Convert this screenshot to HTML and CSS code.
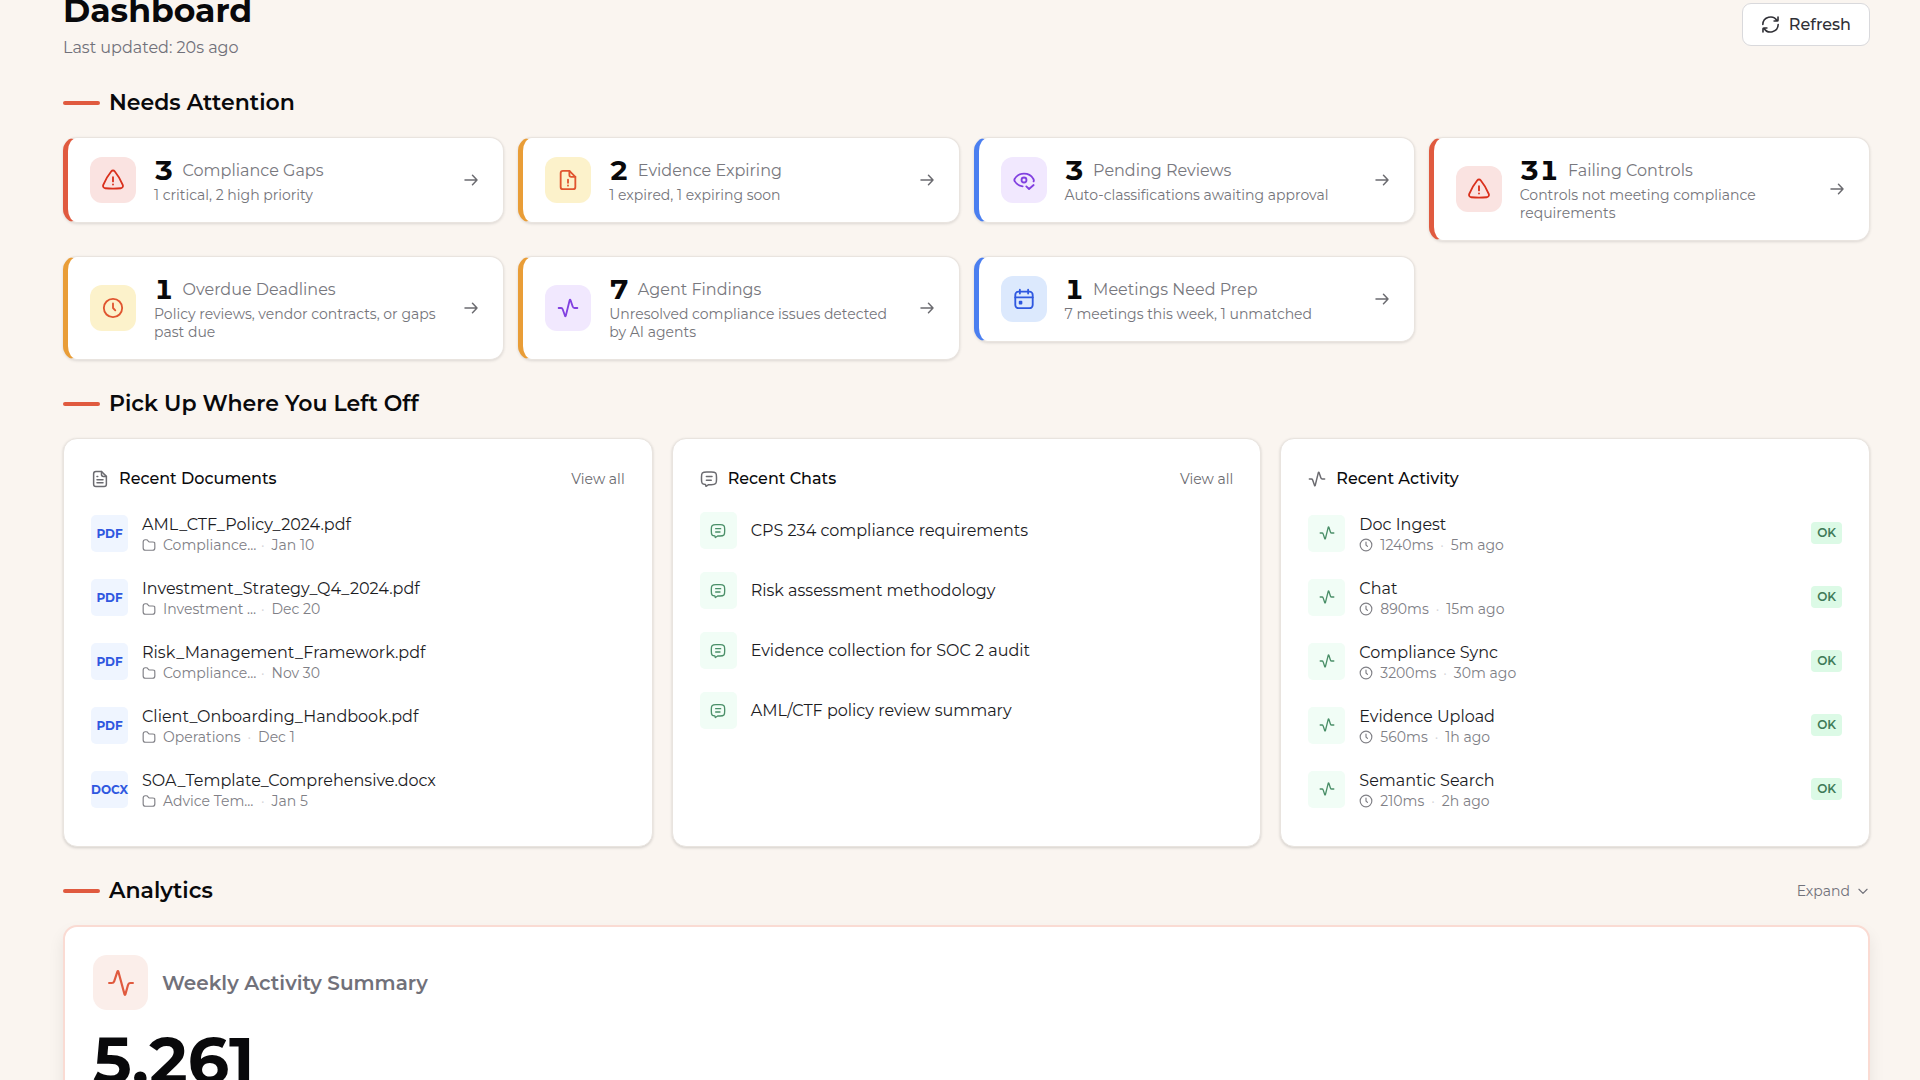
FILE: index.html
```html
<!DOCTYPE html>
<html lang="en">
<head>
<meta charset="utf-8">
<title>Dashboard</title>
<link rel="stylesheet" href="styles.css">
</head>
<body>
<svg class="sprite" aria-hidden="true">
  <symbol id="i-alert" viewBox="0 0 24 24"><path d="M10.200 2.500c.9-1.100 2.700-1.100 3.600 0C16.500 5.800 20.800 13 22.600 17.300c.7 1.800-.3 3.500-2.200 3.700-4.500.5-12.300.5-16.800 0C1.700 20.800.7 19.100 1.400 17.300 3.200 13 7.500 5.800 10.200 2.500z"/><path d="M12 9v4.500M12 16.700v.2"/></symbol>
  <symbol id="i-filealert" viewBox="0 0 24 24"><path d="M13.500 2H6.500A2.500 2.500 0 0 0 4 4.500v15A2.500 2.500 0 0 0 6.500 22h11a2.500 2.500 0 0 0 2.500-2.500V8.500z"/><path d="M13.500 2v4.500a2 2 0 0 0 2 2H20M12 11.500V15M12 18v.2"/></symbol>
  <symbol id="i-eyecheck" viewBox="0 0 24 24"><path d="M22.500 13.500c.4-.8.4-1.700-.5-3C20.700 8.300 17.200 5 12 5s-8.700 3.300-10 5.500c-.7 1-.7 2 0 3 1.200 1.900 4.300 4.900 8.500 5.400"/><circle cx="12" cy="12" r="2.700"/><path d="M14.500 19 17.500 21.800l5-4.300"/></symbol>
  <symbol id="i-pulse" viewBox="0 0 24 24"><path d="M1.800 12h2.700c.9 0 1.300.2 1.700 1.300l2.500 7.200c.3.700.7.700.9 0L13.800 3.500c.2-.8.7-.8 1 0l2.300 6.900c.4 1.200.9 1.600 2 1.600h3.100"/></symbol>
  <symbol id="i-pulse2" viewBox="0 0 24 24"><path d="M1 12h2.500c1.200 0 1.800-.3 2.200-1.500L8.600 1.700c.3-.8.8-.8 1 0l5.600 20.600c.2.800.7.800.9 0l2.300-8.300c.4-1.400.9-2 2.300-2H23"/></symbol>
  <symbol id="i-clock" viewBox="0 0 24 24"><circle cx="12" cy="12" r="10"/><path d="M12 7v5l2.500 2.500"/></symbol>
  <symbol id="i-calendar" viewBox="0 0 24 24"><rect x="2.500" y="4" width="19" height="18" rx="3.500"/><path d="M7.500 1.800V6M16.500 1.800V6M2.500 10.300h19M7.300 15h1.900v1.900H7.300z"/></symbol>
  <symbol id="i-arrow" viewBox="0 0 24 24"><path d="M4 12h16M14 5.800l6 6.200-6 6.200"/></symbol>
  <symbol id="i-refresh" viewBox="0 0 24 24"><path d="M21.500 2.500v4c0 .7-.2 1-1 1h-4M20.300 7.300A9.700 9.700 0 0 0 2.300 12M2.500 21.500v-4c0-.7.200-1 1-1h4M3.700 16.700A9.700 9.700 0 0 0 21.700 12"/></symbol>
  <symbol id="i-file" viewBox="0 0 24 24"><path d="M14 2H6.500A3 3 0 0 0 3.500 5v14a3 3 0 0 0 3 3h11a3 3 0 0 0 3-3V8.500z"/><path d="M14 2v4a2.500 2.500 0 0 0 2.500 2.500h4M8 17h8M8 13h8M8 8.500h1"/></symbol>
  <symbol id="i-chat" viewBox="0 0 24 24"><path d="M22 9.500c0-3-.1-4.500-1.100-5.500S18.500 2.500 15 2.500H9c-3.500 0-4.900.5-5.900 1.500S2 6.500 2 9.500v3c0 3 .1 4.500 1.100 5.500.8.900 1.900 1.200 4.200 1.400l.7 2.400 3.500-2.300H15c3.500 0 4.900-.5 5.900-1.500s1.100-2.500 1.100-5.500z"/><path d="M8.500 13.500h6.500M8.500 8.500H16"/></symbol>
  <symbol id="i-folder" viewBox="0 0 24 24"><path d="M2 7c0-2.800.7-4 3.500-4H7c2 0 2.700.5 3.500 2 .7 1.300 1 1.800 2.500 1.800h5c2.200 0 3.200.2 3.600 1 .4 1 .4 2.200.4 5.200v4c0 3-.8 4-4 4H6c-3.200 0-4-1-4-4z"/></symbol>
  <symbol id="i-down" viewBox="0 0 24 24"><path d="M5 9l7 7 7-7"/></symbol>
</svg>

<main class="page">
  <header class="page-header">
    <div>
      <h1>Dashboard</h1>
      <p class="updated">Last updated: 20s ago</p>
    </div>
    <button type="button" class="refresh"><svg class="icon s20"><use href="#i-refresh"/></svg>Refresh</button>
  </header>

  <section>
    <div class="section-head"><h2>Needs Attention</h2></div>
    <div class="alerts">
      <a href="#" class="alert red"><span class="tile t-red"><svg class="icon s22"><use href="#i-alert"/></svg></span><span class="alert-body"><span class="alert-top"><b>3</b><span class="label">Compliance Gaps</span></span><span class="desc">1 critical, 2 high priority</span></span><svg class="icon s18 arrow"><use href="#i-arrow"/></svg></a>
      <a href="#" class="alert amber"><span class="tile t-yellow"><svg class="icon s22"><use href="#i-filealert"/></svg></span><span class="alert-body"><span class="alert-top"><b>2</b><span class="label">Evidence Expiring</span></span><span class="desc">1 expired, 1 expiring soon</span></span><svg class="icon s18 arrow"><use href="#i-arrow"/></svg></a>
      <a href="#" class="alert blue"><span class="tile t-purple"><svg class="icon s22"><use href="#i-eyecheck"/></svg></span><span class="alert-body"><span class="alert-top"><b>3</b><span class="label">Pending Reviews</span></span><span class="desc">Auto-classifications awaiting approval</span></span><svg class="icon s18 arrow"><use href="#i-arrow"/></svg></a>
      <a href="#" class="alert red"><span class="tile t-red"><svg class="icon s22"><use href="#i-alert"/></svg></span><span class="alert-body"><span class="alert-top"><b>31</b><span class="label">Failing Controls</span></span><span class="desc">Controls not meeting compliance requirements</span></span><svg class="icon s18 arrow"><use href="#i-arrow"/></svg></a>
      <a href="#" class="alert amber"><span class="tile t-yellow"><svg class="icon s22"><use href="#i-clock"/></svg></span><span class="alert-body"><span class="alert-top"><b>1</b><span class="label">Overdue Deadlines</span></span><span class="desc">Policy reviews, vendor contracts, or gaps past due</span></span><svg class="icon s18 arrow"><use href="#i-arrow"/></svg></a>
      <a href="#" class="alert amber"><span class="tile t-purple"><svg class="icon s22"><use href="#i-pulse"/></svg></span><span class="alert-body"><span class="alert-top"><b>7</b><span class="label">Agent Findings</span></span><span class="desc">Unresolved compliance issues detected by AI agents</span></span><svg class="icon s18 arrow"><use href="#i-arrow"/></svg></a>
      <a href="#" class="alert blue"><span class="tile t-blue"><svg class="icon s22"><use href="#i-calendar"/></svg></span><span class="alert-body"><span class="alert-top"><b>1</b><span class="label">Meetings Need Prep</span></span><span class="desc">7 meetings this week, 1 unmatched</span></span><svg class="icon s18 arrow"><use href="#i-arrow"/></svg></a>
    </div>
  </section>

  <section>
    <div class="section-head"><h2>Pick Up Where You Left Off</h2></div>
    <div class="panels">
      <article class="panel">
        <div class="panel-head"><svg class="icon s18"><use href="#i-file"/></svg><h3>Recent Documents</h3><a href="#">View all</a></div>
        <ul class="rows">
          <li><a href="#" class="row"><span class="thumb doc">PDF</span><span class="row-body"><span class="name">AML_CTF_Policy_2024.pdf</span><span class="meta"><svg class="icon s14"><use href="#i-folder"/></svg><span class="clipped">Compliance…</span><i>·</i><span>Jan 10</span></span></span></a></li>
          <li><a href="#" class="row"><span class="thumb doc">PDF</span><span class="row-body"><span class="name">Investment_Strategy_Q4_2024.pdf</span><span class="meta"><svg class="icon s14"><use href="#i-folder"/></svg><span class="clipped">Investment …</span><i>·</i><span>Dec 20</span></span></span></a></li>
          <li><a href="#" class="row"><span class="thumb doc">PDF</span><span class="row-body"><span class="name">Risk_Management_Framework.pdf</span><span class="meta"><svg class="icon s14"><use href="#i-folder"/></svg><span class="clipped">Compliance…</span><i>·</i><span>Nov 30</span></span></span></a></li>
          <li><a href="#" class="row"><span class="thumb doc">PDF</span><span class="row-body"><span class="name">Client_Onboarding_Handbook.pdf</span><span class="meta"><svg class="icon s14"><use href="#i-folder"/></svg><span>Operations</span><i>·</i><span>Dec 1</span></span></span></a></li>
          <li><a href="#" class="row"><span class="thumb doc">DOCX</span><span class="row-body"><span class="name">SOA_Template_Comprehensive.docx</span><span class="meta"><svg class="icon s14"><use href="#i-folder"/></svg><span class="clipped">Advice Tem…</span><i>·</i><span>Jan 5</span></span></span></a></li>
        </ul>
      </article>

      <article class="panel">
        <div class="panel-head"><svg class="icon s18"><use href="#i-chat"/></svg><h3>Recent Chats</h3><a href="#">View all</a></div>
        <ul class="rows chats">
          <li><a href="#" class="row"><span class="thumb green"><svg class="icon s16"><use href="#i-chat"/></svg></span><span class="name">CPS 234 compliance requirements</span></a></li>
          <li><a href="#" class="row"><span class="thumb green"><svg class="icon s16"><use href="#i-chat"/></svg></span><span class="name">Risk assessment methodology</span></a></li>
          <li><a href="#" class="row"><span class="thumb green"><svg class="icon s16"><use href="#i-chat"/></svg></span><span class="name">Evidence collection for SOC 2 audit</span></a></li>
          <li><a href="#" class="row"><span class="thumb green"><svg class="icon s16"><use href="#i-chat"/></svg></span><span class="name">AML/CTF policy review summary</span></a></li>
        </ul>
      </article>

      <article class="panel">
        <div class="panel-head"><svg class="icon s18"><use href="#i-pulse"/></svg><h3>Recent Activity</h3></div>
        <ul class="rows">
          <li class="row"><span class="thumb green"><svg class="icon s16"><use href="#i-pulse"/></svg></span><span class="row-body"><span class="name">Doc Ingest</span><span class="meta"><svg class="icon s14"><use href="#i-clock"/></svg><span>1240ms</span><i>·</i><span>5m ago</span></span></span><span class="ok">OK</span></li>
          <li class="row"><span class="thumb green"><svg class="icon s16"><use href="#i-pulse"/></svg></span><span class="row-body"><span class="name">Chat</span><span class="meta"><svg class="icon s14"><use href="#i-clock"/></svg><span>890ms</span><i>·</i><span>15m ago</span></span></span><span class="ok">OK</span></li>
          <li class="row"><span class="thumb green"><svg class="icon s16"><use href="#i-pulse"/></svg></span><span class="row-body"><span class="name">Compliance Sync</span><span class="meta"><svg class="icon s14"><use href="#i-clock"/></svg><span>3200ms</span><i>·</i><span>30m ago</span></span></span><span class="ok">OK</span></li>
          <li class="row"><span class="thumb green"><svg class="icon s16"><use href="#i-pulse"/></svg></span><span class="row-body"><span class="name">Evidence Upload</span><span class="meta"><svg class="icon s14"><use href="#i-clock"/></svg><span>560ms</span><i>·</i><span>1h ago</span></span></span><span class="ok">OK</span></li>
          <li class="row"><span class="thumb green"><svg class="icon s16"><use href="#i-pulse"/></svg></span><span class="row-body"><span class="name">Semantic Search</span><span class="meta"><svg class="icon s14"><use href="#i-clock"/></svg><span>210ms</span><i>·</i><span>2h ago</span></span></span><span class="ok">OK</span></li>
        </ul>
      </article>
    </div>
  </section>

  <section>
    <div class="section-head"><h2>Analytics</h2><button type="button" class="expand">Expand<svg class="icon s14"><use href="#i-down"/></svg></button></div>
    <article class="summary">
      <div class="summary-head"><span class="summary-tile"><svg class="icon s26"><use href="#i-pulse2"/></svg></span><h3>Weekly Activity Summary</h3></div>
      <p class="total">5,261</p>
    </article>
  </section>
</main>
</body>
</html>
```
FILE: styles.css
```css
* { box-sizing: border-box; margin: 0; padding: 0; }

body {
  height: 100vh;
  overflow: hidden;
  background: #faf5f0;
  color: #09090b;
  font-family: Montserrat, Inter, sans-serif;
  font-size: 16px;
}

a { color: inherit; text-decoration: none; }
ul { list-style: none; }
button { font: inherit; cursor: pointer; }
.sprite { display: none; }

.icon {
  flex: none;
  display: block;
  fill: none;
  stroke: currentColor;
  stroke-width: 2;
  stroke-linecap: round;
  stroke-linejoin: round;
}
.s14 { width: 14px; height: 14px; }
.s16 { width: 16px; height: 16px; }
.s18 { width: 18px; height: 18px; }
.s20 { width: 19px; height: 19px; }
.s22 { width: 22px; height: 22px; }
.s26 { width: 26px; height: 26px; }

/* The page rests slightly scrolled, with its title partly out of view. */
.page {
  display: flex;
  flex-direction: column;
  gap: 28px;
  margin-top: -12px;
  padding: 0 50px 28px 63px;
}

.page-header { display: flex; align-items: center; justify-content: space-between; padding-top: 1px; }
h1 { margin-bottom: 4px; font-size: 33px; line-height: 43px; font-weight: 700; }
.updated { font-size: 16px; line-height: 23px; color: #71717a; }

.refresh {
  display: flex;
  align-items: center;
  gap: 9px;
  height: 43px;
  padding: 0 18px;
  border: 1px solid #d9d9dc;
  border-radius: 9px;
  background: #fff;
  color: #303036;
  font-weight: 500;
}

.section-head { display: flex; align-items: center; justify-content: space-between; height: 32px; margin-bottom: 18px; }
h2 { display: flex; align-items: center; gap: 9px; font-size: 22px; line-height: 32px; font-weight: 600; }
h2::before { content: ""; width: 37px; height: 4px; border-radius: 2px; background: #e05a3f; }

.alerts { display: grid; grid-template-columns: repeat(4, 1fr); gap: 15px 14px; align-items: start; }
.alert {
  display: flex;
  align-items: center;
  gap: 18px;
  padding: 18px 23px 18px 22px;
  border: 1px solid #e9e4df;
  border-left-width: 5px;
  border-radius: 14px;
  background: #fff;
  box-shadow: 0 1px 3px rgba(0, 0, 0, 0.12);
}
.red { border-left-color: #e05a3f; }
.amber { border-left-color: #e99d37; }
.blue { border-left-color: #4b7ff0; }

.tile { display: grid; place-items: center; flex: none; width: 46px; height: 46px; border-radius: 12px; }
.t-red { background: #fae3e1; color: #d9301c; }
.t-yellow { background: #fcf2cb; color: #e0552f; }
.t-purple { background: #f1e8fe; color: #8140e0; }
.t-blue { background: #dce9fd; color: #2f58e0; }

.alert-body { flex: 1; min-width: 0; }
.alert-top { display: flex; align-items: center; gap: 9px; height: 28px; margin-bottom: 2px; }
.alert-top b { font-size: 28px; line-height: 28px; font-variant-numeric: tabular-nums; }
.label { color: #78787e; }
.desc { display: block; font-size: 14px; line-height: 18px; color: #75757b; }
.arrow { color: #6b6b70; }

.panels { display: grid; grid-template-columns: repeat(3, 1fr); gap: 19px; }
.panel {
  padding: 28px 27px 25px;
  border: 1px solid #e9e4df;
  border-radius: 14px;
  background: #fff;
  box-shadow: 0 1px 3px rgba(0, 0, 0, 0.16);
}
.panel-head { display: flex; align-items: center; gap: 10px; height: 24px; margin-bottom: 10px; color: #6b6b70; }
.panel-head h3 { flex: 1; font-size: 16px; line-height: 24px; font-weight: 500; color: #09090b; }
.panel-head a { font-size: 14px; line-height: 24px; }

.chats { display: grid; gap: 1px; }
.row { display: flex; align-items: center; gap: 14px; padding: 11px 0; }
.row-body { flex: 1; min-width: 0; padding: 1px 0; }
.thumb { display: grid; place-items: center; flex: none; width: 37px; height: 37px; border-radius: 5px; }
.doc { background: #eff5ff; color: #2f58e0; font-size: 12px; font-weight: 700; }
.green { background: #f1fdf6; color: #4a8f68; }
.name { display: block; line-height: 24px; color: #1c1c1f; }
.meta { display: flex; align-items: center; gap: 7px; font-size: 14px; line-height: 16px; white-space: nowrap; color: #808086; }
.meta i { font-style: normal; color: #d4d4d8; }
.clipped { width: 91px; }
.ok { padding: 0 6px; border-radius: 4px; background: #dcfae6; color: #3f7a58; font-size: 12px; line-height: 22px; font-weight: 600; }

.expand { display: flex; align-items: center; gap: 6px; border: 0; background: none; color: #71717a; font-size: 14px; line-height: 24px; }

.summary {
  padding: 28px;
  border: 2px solid #fadbd3;
  border-radius: 14px;
  background: #fff;
  box-shadow: 0 8px 16px rgba(0, 0, 0, 0.08);
}
.summary-head { display: flex; align-items: center; gap: 14px; }
.summary-head h3 { font-size: 20px; line-height: 28px; font-weight: 600; color: #71717a; }
.summary-tile { display: grid; place-items: center; width: 55px; height: 55px; border-radius: 14px; background: #fbeeea; color: #e05a3f; }
.total { margin-top: 15px; font-size: 65px; line-height: 72px; font-weight: 700; }
```
